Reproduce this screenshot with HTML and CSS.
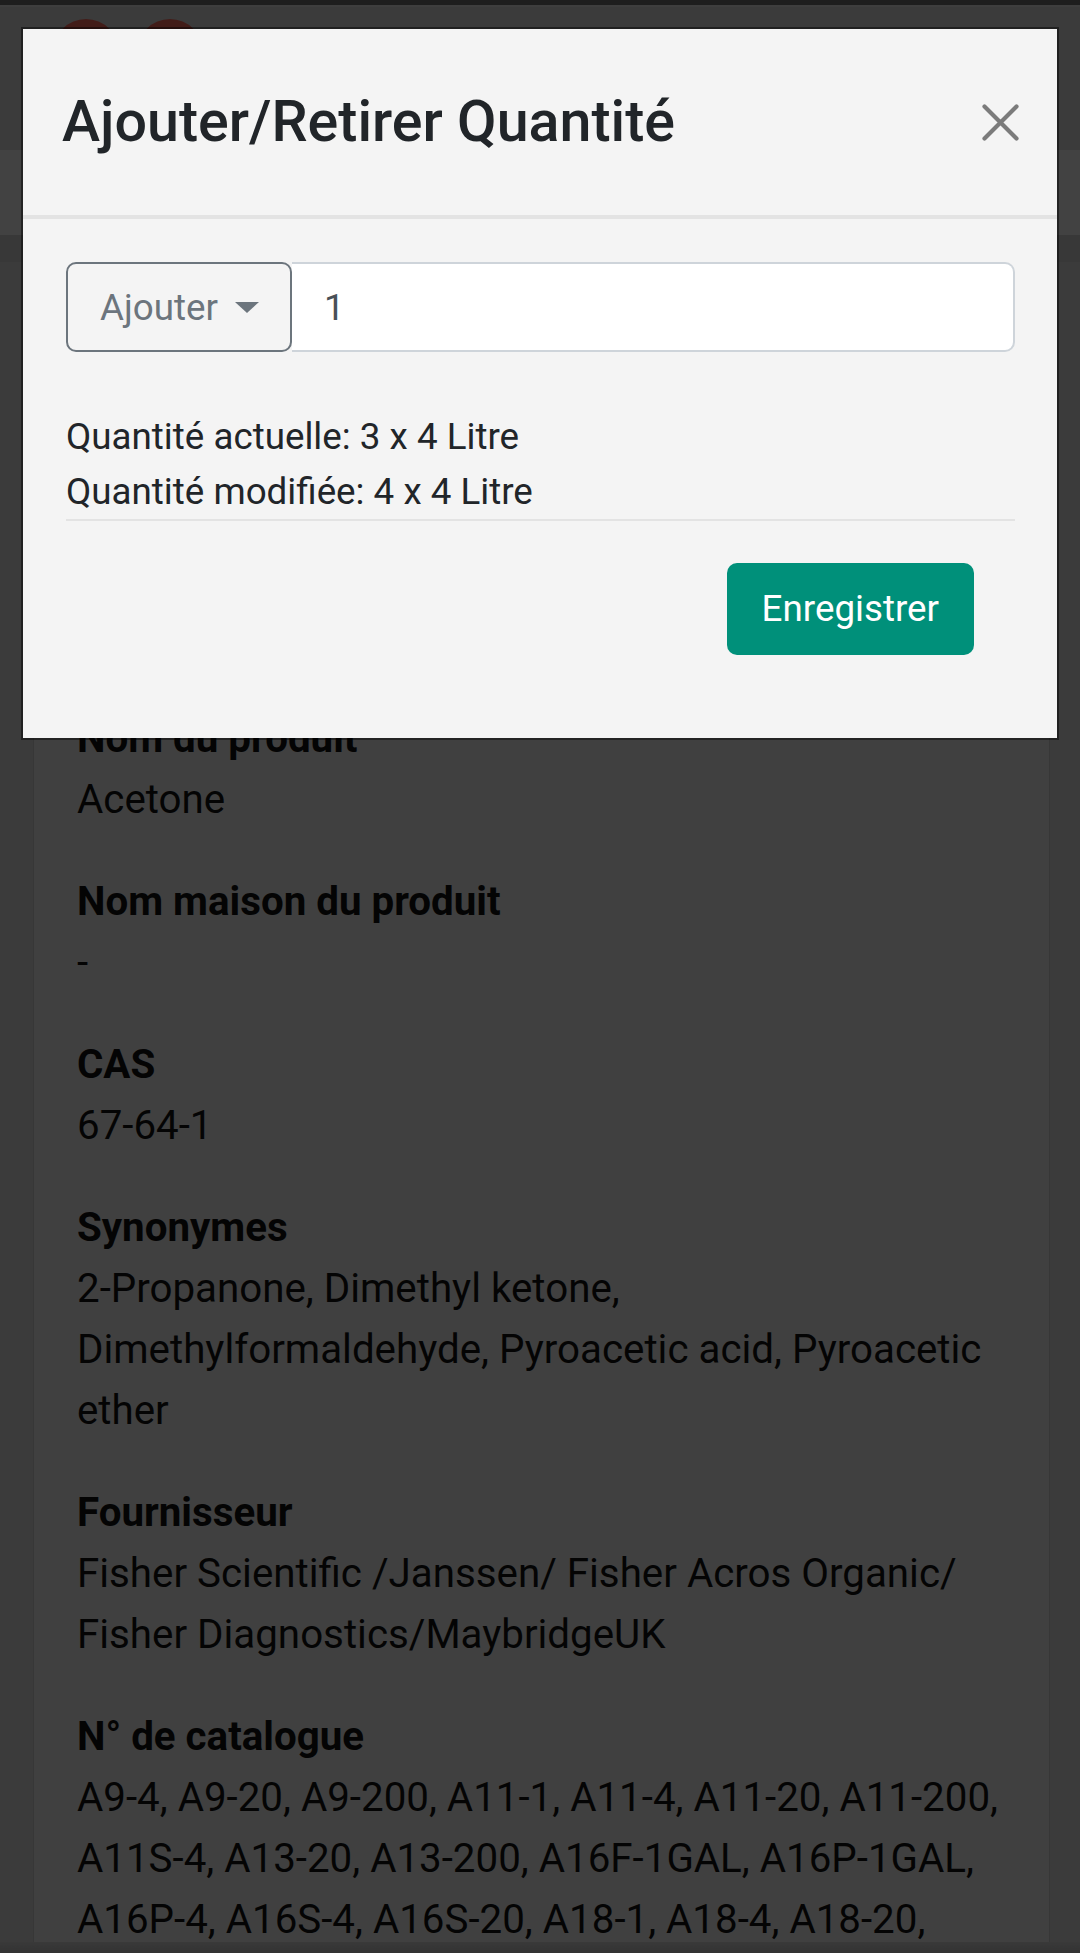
FILE: index.html
```html
<!DOCTYPE html>
<html lang="fr">
  <head>
    <meta name="viewport" content="width=device-width, initial-scale=1.0" />
    <title>Acetone - Inventaire</title>
    <link rel="stylesheet" href="styles.css">
  </head>
  <body>
    <div class="statusbar"></div>
    <header class="navbar">
      <span class="logo-dot"></span>
      <span class="logo-dot"></span>
    </header>
    <div class="searchbar"></div>
    <div class="tabs"></div>

    <main class="content">
      <section class="card">
        <dl class="fields">
          <div class="field">
            <dt>Nom du produit</dt>
            <dd>Acetone</dd>
          </div>
          <div class="field">
            <dt>Nom maison du produit</dt>
            <dd>-</dd>
          </div>
          <div class="field">
            <dt>CAS</dt>
            <dd>67-64-1</dd>
          </div>
          <div class="field">
            <dt>Synonymes</dt>
            <dd>2-Propanone, Dimethyl ketone, Dimethylformaldehyde, Pyroacetic acid, Pyroacetic ether</dd>
          </div>
          <div class="field">
            <dt>Fournisseur</dt>
            <dd>Fisher Scientific /Janssen/ Fisher Acros Organic/ Fisher Diagnostics/MaybridgeUK</dd>
          </div>
          <div class="field">
            <dt>N° de catalogue</dt>
            <dd>A9-4, A9-20, A9-200, A11-1, A11-4, A11-20, A11-200, A11S-4, A13-20, A13-200, A16F-1GAL, A16P-1GAL, A16P-4, A16S-4, A16S-20, A18-1, A18-4, A18-20, A18-200, A19-1, A19-4, A20-4</dd>
          </div>
        </dl>
      </section>
    </main>
    <div class="bottom-nav"></div>

    <div class="backdrop"></div>
    <div class="modal">
      <div class="modal-dialog">
        <div class="modal-header">
          <h5 class="modal-title">Ajouter/Retirer Quantité</h5>
          <button class="close" aria-label="Fermer">
            <svg width="37" height="37" viewBox="0 0 37 37">
              <path d="M2.5 2.5 L34.5 34.5 M34.5 2.5 L2.5 34.5" stroke="#7b7b7b" stroke-width="4.2" stroke-linecap="round" fill="none" />
            </svg>
          </button>
        </div>
        <div class="modal-body">
          <div class="input-group">
            <button class="dropdown-toggle">Ajouter<span class="caret"></span></button>
            <input class="qty" type="text" value="1">
          </div>
          <div class="summary">
            <p>Quantité actuelle: 3 x 4 Litre</p>
            <p>Quantité modifiée: 4 x 4 Litre</p>
          </div>
          <hr>
          <div class="actions">
            <button class="btn-save">Enregistrer</button>
          </div>
        </div>
      </div>
    </div>
  </body>
</html>
```

FILE: styles.css
```css
* {
  margin: 0;
  padding: 0;
  box-sizing: border-box;
  font-family: Roboto, "Liberation Sans", sans-serif;
}
body {
  height: 1953px;
  overflow: hidden;
  background: #e3e3e3;
  color: #111;
}
.statusbar {
  height: 5px;
  background: #737373;
  border-bottom: 2px solid #efefef;
  box-sizing: content-box;
}
.navbar {
  height: 143px;
  background: #e3e3e3;
  display: flex;
  gap: 18px;
  padding: 12px 0 0 53px;
}
.logo-dot {
  width: 66px;
  height: 66px;
  border-radius: 50%;
  background: #ff6b5e;
}
.searchbar {
  height: 85px;
  background: #fff;
}
.tabs {
  height: 27px;
  background: #d7d7d7;
}
.content {
  padding: 0 30px 0 33px;
}
.card {
  background: #f6f6f6;
  border-left: 1px solid #d3d3d3;
  border-right: 1px solid #d3d3d3;
  padding: 446px 40px 0 43px;
}
.field {
  margin-bottom: 41px;
  font-size: 40.3px;
  line-height: 61px;
}
.field dt {
  font-weight: 700;
}
.bottom-nav {
  position: fixed;
  left: 0;
  right: 0;
  bottom: 0;
  height: 11px;
  background: linear-gradient(#dcdcdc, #c4c4c4);
}

/* modal */
.backdrop {
  position: fixed;
  inset: 0;
  background: rgba(0, 0, 0, 0.74);
  z-index: 10;
}
.modal {
  position: fixed;
  inset: 0;
  z-index: 20;
  padding: 27px 21px 0 21px;
}
.modal-dialog {
  background: #f4f4f4;
  background-clip: padding-box;
  border: 2px solid rgba(0, 0, 0, 0.45);
}
.modal-header {
  height: 190px;
  display: flex;
  align-items: center;
  justify-content: space-between;
  padding: 0 38px 0 39px;
  border-bottom: 4px solid #e3e3e3;
}
.modal-title {
  font-size: 57.4px;
  font-weight: 500;
  color: #212529;
  line-height: 1.2;
}
.close {
  background: none;
  border: none;
  display: flex;
}
.modal-body {
  padding: 43px 42px 83px 43px;
  font-size: 36.75px;
  color: #212529;
}
.input-group {
  display: flex;
  height: 90px;
}
.dropdown-toggle {
  display: inline-flex;
  align-items: center;
  padding: 0 31px 0 32px;
  background: #f4f4f4;
  border: 2px solid #6c757d;
  border-radius: 10px;
  color: #6c757d;
  font-size: 36.75px;
}
.caret {
  margin-left: 17px;
  border-top: 11px solid #6c757d;
  border-left: 12px solid transparent;
  border-right: 12px solid transparent;
}
.qty {
  flex: 1;
  min-width: 0;
  border: 2px solid #ced4da;
  border-left: none;
  border-radius: 0 10px 10px 0;
  background: #fff;
  padding-left: 32px;
  font-size: 36.75px;
  color: #495057;
}
.summary {
  margin-top: 56.5px;
  line-height: 55px;
}
hr {
  border: none;
  border-top: 2px solid #e3e3e3;
}
.actions {
  display: flex;
  justify-content: flex-end;
  padding: 42px 41px 0 0;
}
.btn-save {
  background: #00907a;
  color: #fff;
  border: none;
  border-radius: 10px;
  font-size: 36.75px;
  line-height: 55px;
  padding: 18.5px 35px;
}
```
